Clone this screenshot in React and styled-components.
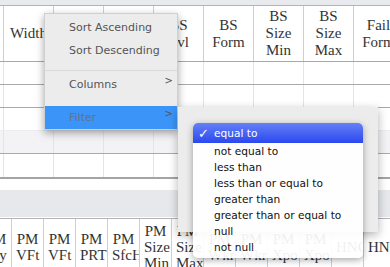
import React from 'react';
import styled, { createGlobalStyle } from 'styled-components';

const Global = createGlobalStyle`
  html, body { margin: 0; padding: 0; background: #fff; }
  body { font-family: "Liberation Serif", "Times New Roman", serif; }
`

const Page = styled.div`
  position: relative;
  width: 390px;
  height: 267px;
  overflow: hidden;
  background: #fff;
`

const TopBand = styled.div`
  height: 5px;
  background: #e8eaee;
`

const Grid = styled.div`
  margin-left: ${p => p.shift}px;
`

const HeadRow = styled.div`
  display: flex;
  height: ${p => p.h}px;
  box-sizing: border-box;
  border-top: 1px solid #b4b4b4;
  border-bottom: 1px solid #a8a8a8;
`

const HeadCell = styled.div`
  flex: 0 0 ${p => p.w}px;
  box-sizing: border-box;
  border-right: 1px solid #cfcfcf;
  padding: 0 4px;
  display: flex;
  align-items: center;
  overflow: hidden;
  color: #333;
  font-size: 15px;
  line-height: ${p => p.lh}px;
  span { width: 100%; text-align: center; }
`

const BodyRow = styled.div`
  display: flex;
  height: ${p => p.h}px;
  box-sizing: border-box;
  background: ${p => p.bg || '#fff'};
  border-bottom: ${p => p.line || '1px solid #a9a9a9'};
`

const BodyCell = styled.div`
  flex: 0 0 50px;
  box-sizing: border-box;
  border-right: 1px solid #e4e4e4;
`

const Gap = styled.div`
  height: 11px;
`

const GreyBand = styled.div`
  height: 27px;
  background: #e6e8ec;
  border-bottom: 1px solid #fff;
`

const Menu = styled.div`
  position: absolute;
  left: 44px;
  top: 13px;
  width: 134px;
  box-sizing: border-box;
  background: #ececec;
  border: 1px solid rgba(0, 0, 0, 0.12);
  box-shadow: 0 3px 8px rgba(0, 0, 0, 0.35);
  padding-top: 2px;
  font-family: "DejaVu Sans", Verdana, sans-serif;
  font-size: 11px;
  color: #555;
`

const MenuItem = styled.div`
  display: flex;
  align-items: center;
  height: 23px;
  padding-left: 24px;
  background: ${p => (p.active ? '#3b95f8' : 'transparent')};
  color: ${p => (p.active ? '#62738a' : '#555')};
`

const Arrow = styled.span`
  margin-left: auto;
  margin-right: 4px;
  align-self: flex-start;
  margin-top: 2px;
  font-size: 10px;
  color: #555;
`

const Sep = styled.div`
  height: 1px;
  background: ${p => p.faint ? 'transparent' : '#d9d9d9'};
  margin: ${p => p.m};
`

const SubPanel = styled.div`
  position: absolute;
  left: 178px;
  top: 107px;
  width: 200px;
  height: 125px;
  box-sizing: border-box;
  padding: 16px 15px 0;
  background: #ececec;
  box-shadow: 0 3px 9px rgba(0, 0, 0, 0.3);
`

const OptionList = styled.div`
  width: 170px;
  padding-bottom: 3px;
  border-radius: 5px;
  overflow: hidden;
  background: rgba(255, 255, 255, 0.93);
  box-shadow: 0 2px 7px rgba(0, 0, 0, 0.35);
  font-family: "DejaVu Sans", Verdana, sans-serif;
  font-size: 10.6px;
  color: #111;
`

const Option = styled.div`
  display: flex;
  align-items: center;
  height: ${p => (p.selected ? 20 : 16)}px;
  color: ${p => (p.selected ? '#fff' : '#111')};
  background: ${p => (p.selected ? 'linear-gradient(#6580f6, #2a48ef)' : 'transparent')};
`

const Mark = styled.span`
  flex: 0 0 21px;
  box-sizing: border-box;
  padding-left: 5px;
  font-size: 13px;
  font-weight: bold;
`

const top1 = ['', 'Width', '', '', 'BS Lvl', 'BS Form', 'BS Size Min', 'BS Size Max', 'Fail Form']
const top2 = ['PM Qty', 'PM VFt', 'PM VFt', 'PM PRT', 'PM SfcHt', 'PM Size Min', 'PM Size Max',
  'PM Wkr', 'PM Wkr', 'PM Xpo', 'PM Xpo', 'HNC', 'HNC']
const rows = [
  { h: 23 },
  { h: 23 },
  { h: 23, line: '1px solid #ececf0' },
  { h: 23, bg: '#f3f3f6' },
  { h: 25, line: '2px solid #a4a4a4' },
]
const filters = ['equal to', 'not equal to', 'less than', 'less than or equal to',
  'greater than', 'greater than or equal to', 'null', 'not null']

const App = () => {
  return (
    <Page>
      <Global />
      <TopBand />
      <Grid shift={-46}>
        <HeadRow h={57}>
          {top1.map((t, i) => (
            <HeadCell key={i} w={50} lh={17}><span>{t}</span></HeadCell>
          ))}
        </HeadRow>
        {rows.map((r, i) => (
          <BodyRow key={i} h={r.h} bg={r.bg} line={r.line}>
            {top1.map((_, j) => <BodyCell key={j} />)}
          </BodyRow>
        ))}
      </Grid>
      <Gap />
      <GreyBand />
      <Grid shift={-20}>
        <HeadRow h={57}>
          {top2.map((t, i) => (
            <HeadCell key={i} w={32} lh={16}><span>{t}</span></HeadCell>
          ))}
        </HeadRow>
      </Grid>

      <Menu>
        <MenuItem>Sort Ascending</MenuItem>
        <MenuItem>Sort Descending</MenuItem>
        <Sep m="8px 0 2px" />
        <MenuItem>Columns<Arrow>&gt;</Arrow></MenuItem>
        <Sep faint m="4px 0 5px" />
        <MenuItem active>Filter<Arrow>&gt;</Arrow></MenuItem>
      </Menu>

      <SubPanel>
        <OptionList>
          {filters.map((f, i) => (
            <Option key={f} selected={i === 0}>
              <Mark>{i === 0 ? '✓' : ''}</Mark>
              {f}
            </Option>
          ))}
        </OptionList>
      </SubPanel>
    </Page>
  );
}

export default App;
